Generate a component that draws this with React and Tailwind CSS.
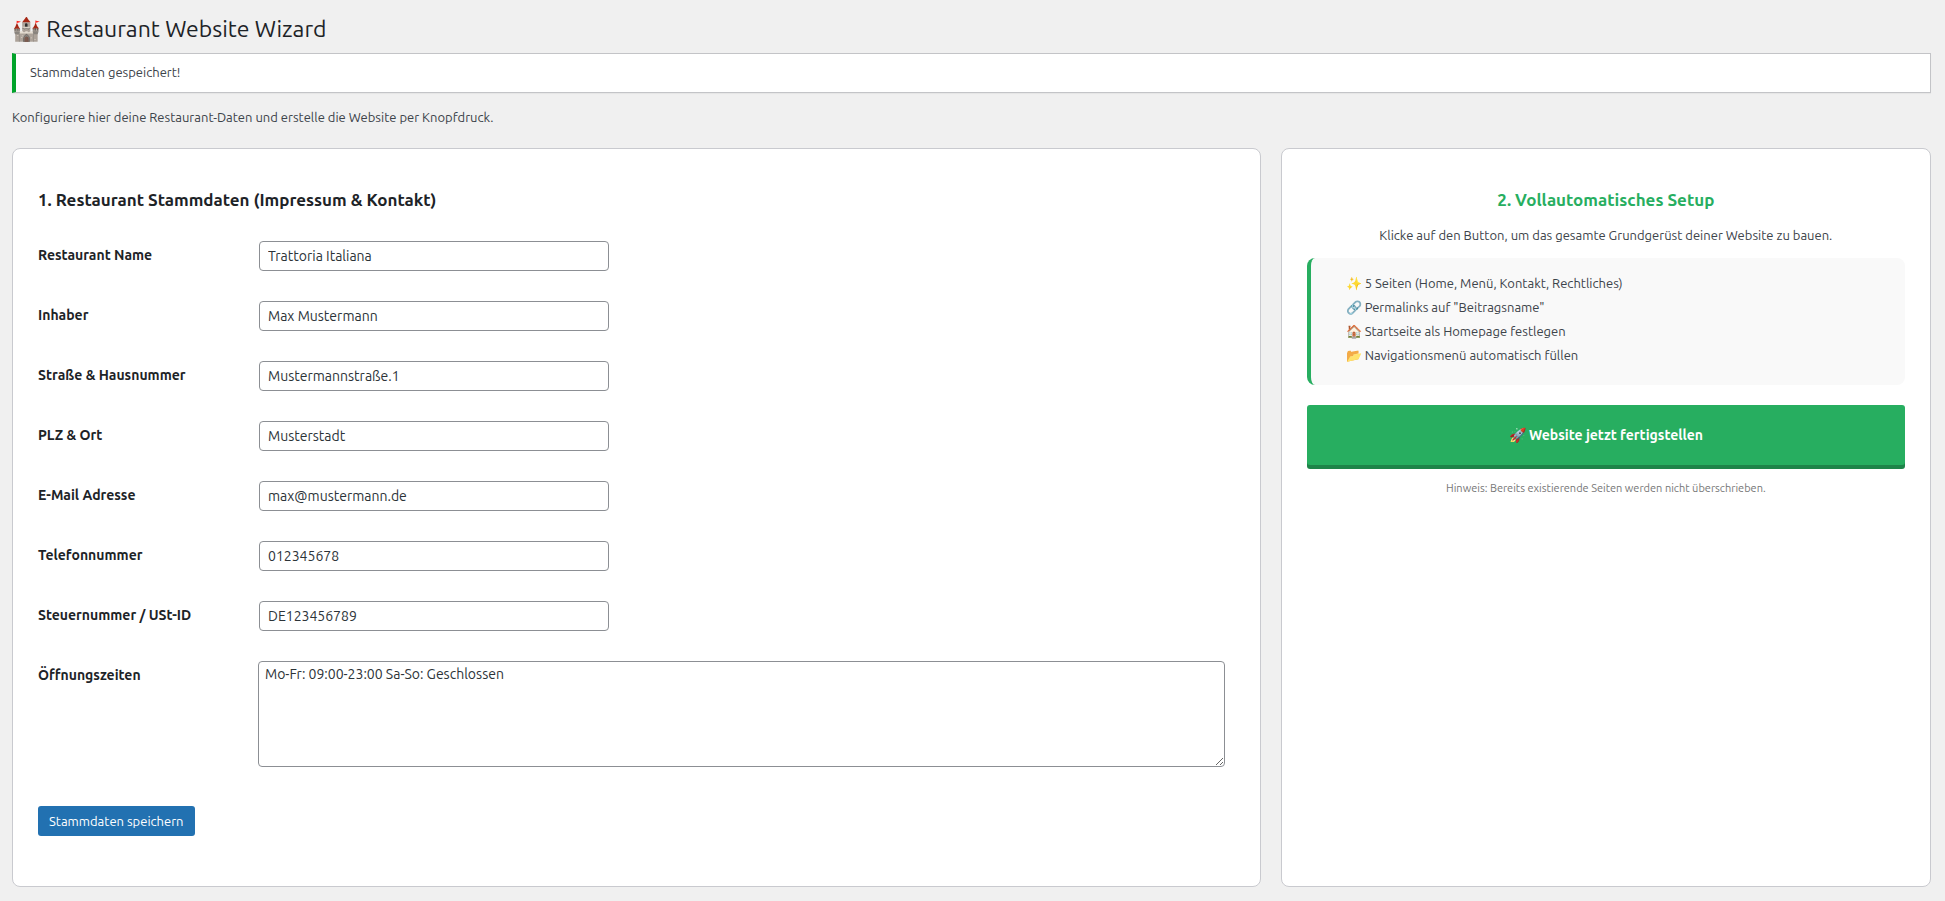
import React from "react";

const fields = [
  { id: "name", label: "Restaurant Name", value: "Trattoria Italiana" },
  { id: "owner", label: "Inhaber", value: "Max Mustermann" },
  { id: "street", label: "Straße & Hausnummer", value: "Mustermannstraße.1" },
  { id: "city", label: "PLZ & Ort", value: "Musterstadt" },
  { id: "email", label: "E-Mail Adresse", value: "max@mustermann.de", type: "email" },
  { id: "phone", label: "Telefonnummer", value: "012345678" },
  { id: "tax", label: "Steuernummer / USt-ID", value: "DE123456789" },
];

const steps = [
  "✨ 5 Seiten (Home, Menü, Kontakt, Rechtliches)",
  '🔗 Permalinks auf "Beitragsname"',
  "🏠 Startseite als Homepage festlegen",
  "📂 Navigationsmenü automatisch füllen",
];

function Field({ id, label, children }) {
  return (
    <div className="flex items-start">
      <label htmlFor={id} className="w-[220px] shrink-0 pt-1 text-sm leading-5 font-semibold text-[#1d2327]">
        {label}
      </label>
      {children}
    </div>
  );
}

export default function App() {
  return (
    <div className="min-h-screen bg-[#f0f0f0] pt-3 pr-3.5 pb-3.5 pl-3 font-[Ubuntu,'Noto_Sans',sans-serif] text-[13px] leading-5 text-[#3c434a]">
      <h1 className="pt-0.5 text-[23px] leading-[30px] font-normal text-[#1d2327]">🏰 Restaurant Website Wizard</h1>

      <div role="status" className="mt-[9px] border border-l-4 border-[#c3c4c7] border-l-[#00a32a] bg-white px-3.5 pt-2 pb-2.5 shadow-[0_1px_1px_rgba(0,0,0,0.04)]">
        <p>Stammdaten gespeichert!</p>
      </div>

      <p className="mt-3.5">Konfiguriere hier deine Restaurant-Daten und erstelle die Website per Knopfdruck.</p>

      <main className="mt-[21px] flex gap-5">
        <section className="box-content min-w-0 flex-[2] rounded-lg border border-[#c9cacf] bg-white p-[25px]">
          <h2 className="pt-3.5 text-[17px] leading-6 font-semibold text-[#1d2327]">1. Restaurant Stammdaten (Impressum &amp; Kontakt)</h2>
          <form className="mt-[29px]" onSubmit={(e) => e.preventDefault()}>
            <div className="flex flex-col gap-[30px] pr-2.5">
              {fields.map((f) => (
                <Field key={f.id} id={f.id} label={f.label}>
                  <input
                    id={f.id}
                    type={f.type || "text"}
                    defaultValue={f.value}
                    className="ml-px h-[30px] w-[350px] rounded border border-[#8c8f94] bg-white px-2 text-sm text-[#2c3338]"
                  />
                </Field>
              ))}
              <Field id="hours" label="Öffnungszeiten">
                <textarea
                  id="hours"
                  rows={5}
                  defaultValue="Mo-Fr: 09:00-23:00 Sa-So: Geschlossen"
                  className="h-[106px] min-w-0 flex-1 rounded border border-[#8c8f94] bg-white px-1.5 py-0.5 text-sm leading-5 text-[#2c3338]"
                />
              </Field>
            </div>
            <button type="submit" className="mt-[39px] mb-[25px] h-[30px] rounded-[3px] bg-[#2271b1] px-[11px] text-[13px] text-white">
              Stammdaten speichern
            </button>
          </form>
        </section>

        <section className="box-content min-w-0 flex-1 rounded-lg border border-[#c9cacf] bg-white p-[25px] text-center">
          <h2 className="pt-3.5 text-[17px] leading-6 font-semibold text-[#27ae60]">2. Vollautomatisches Setup</h2>
          <p className="mt-[13px]">Klicke auf den Button, um das gesamte Grundgerüst deiner Website zu bauen.</p>
          <ul className="mt-[13px] flex flex-col gap-1 rounded-lg border-l-4 border-[#27ae60] bg-[#f9f9f9] pt-[15px] pr-4 pb-5 pl-[35px] text-left">
            {steps.map((s) => (
              <li key={s}>{s}</li>
            ))}
          </ul>
          <button type="button" className="mt-5 h-[60px] w-full rounded-[3px] bg-[#27ae60] text-sm font-semibold text-white shadow-[0_4px_0_#1e8449]">
            🚀 Website jetzt fertigstellen
          </button>
          <p className="mt-[15px] text-[11px] leading-4 text-[#777777]">Hinweis: Bereits existierende Seiten werden nicht überschrieben.</p>
        </section>
      </main>
    </div>
  );
}
